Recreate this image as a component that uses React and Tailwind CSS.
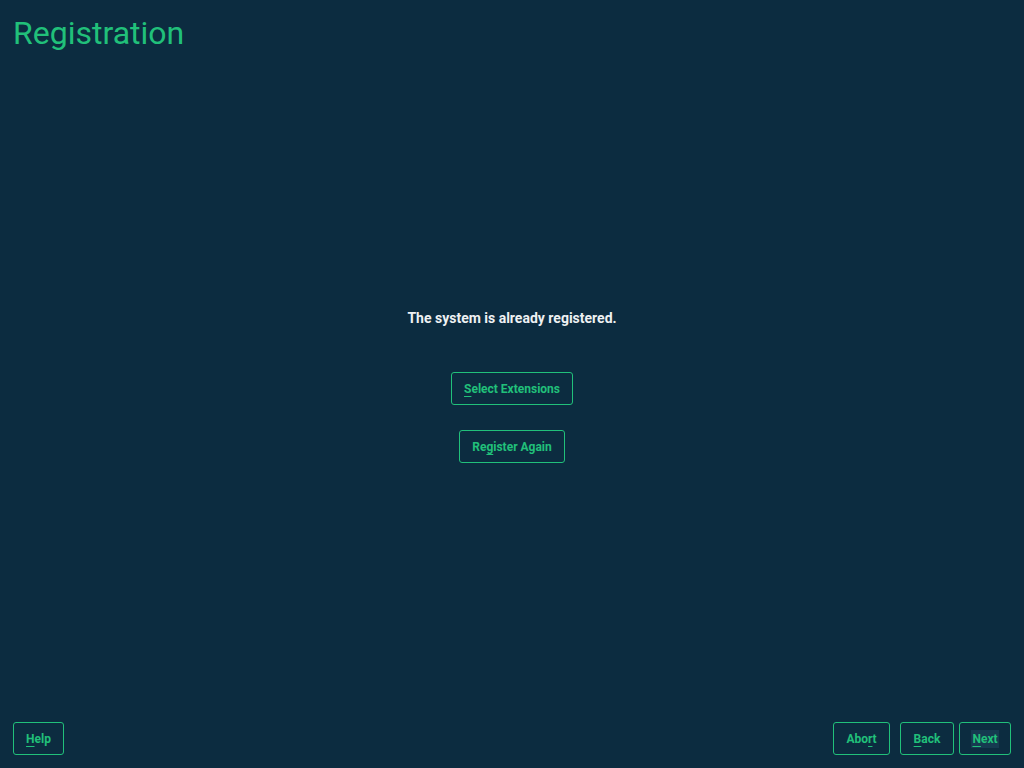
import React from 'react';

const font = { fontFamily: 'Roboto, "Noto Sans", sans-serif' };

const Btn = ({ className = '', children }) => (
    <button
        className={
            'flex items-center justify-center h-[33px] rounded-[3px] border border-[#21c07a] text-[12px] font-bold text-[#21c07a] ' +
            className
        }
    >
        {children}
    </button>
);

const U = ({ children }) => (
    <span className="underline underline-offset-[3px] decoration-1">{children}</span>
);

export default function App() {
    return (
        <div className="h-[768px] w-full flex flex-col bg-[#0c2c40] overflow-hidden" style={font}>

            {/* Title */}
            <div className="h-[60px] px-[13px] pt-[14px]">
                <h1 className="text-[32px] leading-[38px] font-normal text-[#21c07a]">Registration</h1>
            </div>

            {/* Content */}
            <div className="flex flex-col items-center pt-[250px]">
                <p className="text-[14px] leading-[16px] font-bold text-[#eef1f3]">
                    The system is already registered.
                </p>
                <Btn className="w-[122px] mt-[46px]">
                    <U>S</U>elect Extensions
                </Btn>
                <Btn className="w-[106px] mt-[25px]">
                    Re<U>g</U>ister Again
                </Btn>
            </div>

            {/* Footer */}
            <div className="mt-auto flex items-center px-[13px] pb-[13px]">
                <Btn className="w-[51px]">
                    <U>H</U>elp
                </Btn>
                <div className="ml-auto flex items-center">
                    <Btn className="w-[57px]">
                        Abo<U>r</U>t
                    </Btn>
                    <Btn className="w-[54px] ml-[10px]">
                        <U>B</U>ack
                    </Btn>
                    <Btn className="w-[52px] ml-[5px]">
                        <span className="bg-[#163a50] px-[1px] py-[2px] leading-[14px]">
                            <U>N</U>ext
                        </span>
                    </Btn>
                </div>
            </div>

        </div>
    );
}
